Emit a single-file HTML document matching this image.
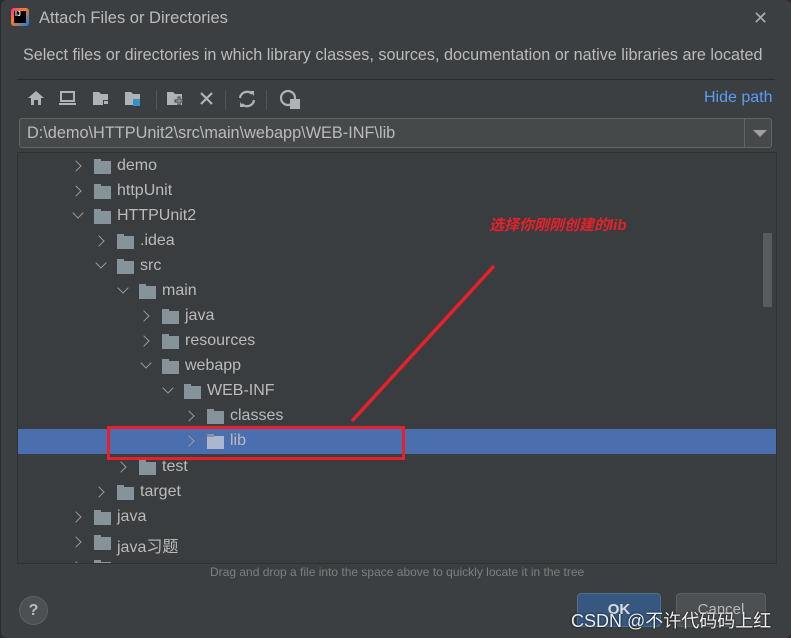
<!DOCTYPE html>
<html><head><meta charset="utf-8"><style>
*{margin:0;padding:0;box-sizing:border-box}
body{width:791px;height:638px;background:#2b2b2b;overflow:hidden;font-family:"Liberation Sans","Noto Sans CJK SC",sans-serif;position:relative}
.dlg{position:absolute;left:1px;top:0;width:790px;height:638px;background:#3c3f41;border-radius:6px}
.abs{position:absolute}
.t{color:#bbbbbb;font-size:16px;white-space:nowrap}
.row{position:absolute;left:0;height:25px;width:758px}
.row span{position:absolute;top:4px;color:#bbbbbb;font-size:16px;white-space:nowrap}
.chev{position:absolute;top:9px;width:8px;height:8px;border-right:1.6px solid #9a9a9a;border-bottom:1.6px solid #9a9a9a}
.r{transform:rotate(-45deg)}
.d{transform:rotate(45deg);top:6px}
.fold{position:absolute;top:8px;width:17px;height:13px;background:#87939a}
.fold:before{content:"";position:absolute;left:0;top:-2px;width:7px;height:3px;background:#87939a}
</style></head><body>
<div class="dlg">
<div class="abs" style="left:10px;top:8px;width:18px;height:18px;background:linear-gradient(135deg,#fc318c,#fe7a20 40%,#087cfa);border-radius:3px"><div style="position:absolute;left:3px;top:3px;width:12px;height:12px;background:#000;color:#fff;font-size:7px;font-weight:bold;line-height:8px;padding-left:1px">IJ</div></div>
<div class="abs t" style="left:38px;top:9px;font-size:16.5px">Attach Files or Directories</div>
<div class="abs" style="left:752px;top:8px;color:#aaa;font-size:18px">✕</div>
<div class="abs t" style="left:22px;top:46px;font-size:16.2px">Select files or directories in which library classes, sources, documentation or native libraries are located</div>
<div class="abs" style="left:16px;top:79px;width:758px;height:1px;background:#2b2b2b"></div>
<svg class="abs" style="left:25px;top:88px" width="280" height="22" fill="#aeb3b6">
<path d="M2 10 L10 3 L18 10 H15 V17 H12 V12 H8 V17 H5 V10Z"/>
<rect x="35" y="4" width="13" height="9" fill="none" stroke="#aeb3b6" stroke-width="2"/><rect x="33" y="15" width="17" height="2"/>
<path d="M67 4 h6 l2 2 h7 v11 h-15z"/><rect x="77" y="12" width="6" height="5" fill="#3c3f41"/><rect x="78" y="13" width="4" height="3"/>
<path d="M99 4 h6 l2 2 h7 v11 h-15z"/><rect x="107" y="11" width="7" height="7" fill="#3592c4"/>
<rect x="130" y="2" width="1" height="20" fill="#555"/>
<path d="M141 4 h6 l2 2 h7 v11 h-15z"/><path d="M152 9 h2 v3 h3 v2 h-3 v3 h-2 v-3 h-3 v-2 h3z" fill="#aeb3b6" stroke="#3c3f41"/>
<path d="M175 5 L186 16 M186 5 L175 16" stroke="#aeb3b6" stroke-width="2.2"/>
<rect x="199" y="2" width="1" height="20" fill="#555"/>
<path d="M214 10 a7 7 0 0 1 12-4 M228 12 a7 7 0 0 1-12 4" fill="none" stroke="#aeb3b6" stroke-width="2.2"/><path d="M224 3 l4 0 0 5z M218 19 l-4 0 0-5z"/>
<rect x="240" y="2" width="1" height="20" fill="#555"/>
<circle cx="262" cy="10" r="7" fill="none" stroke="#aeb3b6" stroke-width="2.2"/><rect x="264" y="11" width="10" height="10"/>
</svg>
<div class="abs" style="left:703px;top:89px;color:#589df6;font-size:16px">Hide path</div>
<div class="abs" style="left:18px;top:118px;width:753px;height:30px;background:#45494a;border:1px solid #646464;border-radius:3px"></div>
<div class="abs" style="left:743px;top:119px;width:1px;height:28px;background:#646464"></div>
<div class="abs" style="left:752px;top:130px;width:0;height:0;border-left:7px solid transparent;border-right:7px solid transparent;border-top:7px solid #a0a0a0"></div>
<div class="abs t" style="left:26px;top:124px;font-size:16.3px">D:\demo\HTTPUnit2\src\main\webapp\WEB-INF\lib</div>
<div class="abs" style="left:16px;top:152px;width:760px;height:412px;background:#3a3d3f;border:1px solid #2f3133;overflow:hidden">
<div class="abs" style="left:745px;top:80px;width:9px;height:74px;background:#585b5d"></div>
<div class="row" style="top:0"><i class="chev r" style="left:54px"></i><i class="fold" style="left:76px"></i><span style="left:99px">demo</span></div>
<div class="row" style="top:25px"><i class="chev r" style="left:54px"></i><i class="fold" style="left:76px"></i><span style="left:99px">httpUnit</span></div>
<div class="row" style="top:50px"><i class="chev d" style="left:56px"></i><i class="fold" style="left:76px"></i><span style="left:99px">HTTPUnit2</span></div>
<div class="row" style="top:75px"><i class="chev r" style="left:77px"></i><i class="fold" style="left:99px"></i><span style="left:122px">.idea</span></div>
<div class="row" style="top:100px"><i class="chev d" style="left:79px"></i><i class="fold" style="left:99px"></i><span style="left:122px">src</span></div>
<div class="row" style="top:125px"><i class="chev d" style="left:101px"></i><i class="fold" style="left:121px"></i><span style="left:144px">main</span></div>
<div class="row" style="top:150px"><i class="chev r" style="left:122px"></i><i class="fold" style="left:144px"></i><span style="left:167px">java</span></div>
<div class="row" style="top:175px"><i class="chev r" style="left:122px"></i><i class="fold" style="left:144px"></i><span style="left:167px">resources</span></div>
<div class="row" style="top:200px"><i class="chev d" style="left:124px"></i><i class="fold" style="left:144px"></i><span style="left:167px">webapp</span></div>
<div class="row" style="top:225px"><i class="chev d" style="left:146px"></i><i class="fold" style="left:166px"></i><span style="left:189px">WEB-INF</span></div>
<div class="row" style="top:250px"><i class="chev r" style="left:167px"></i><i class="fold" style="left:189px"></i><span style="left:212px">classes</span></div>
<div class="row" style="top:276px;background:#4b6eaf"><i class="chev r" style="left:167px;top:8px"></i><i class="fold" style="left:189px;background:#a9b8cf;top:7px"></i><span style="left:212px;top:3px">lib</span></div>
<div class="row" style="top:301px"><i class="chev r" style="left:99px"></i><i class="fold" style="left:121px"></i><span style="left:144px">test</span></div>
<div class="row" style="top:326px"><i class="chev r" style="left:77px"></i><i class="fold" style="left:99px"></i><span style="left:122px">target</span></div>
<div class="row" style="top:351px"><i class="chev r" style="left:54px"></i><i class="fold" style="left:76px"></i><span style="left:99px">java</span></div>
<div class="row" style="top:376px"><i class="chev r" style="left:54px"></i><i class="fold" style="left:76px"></i><span style="left:99px">java习题</span></div>
<div class="row" style="top:401px"><i class="chev r" style="left:54px"></i><i class="fold" style="left:76px"></i><span style="left:99px">java算法</span></div>
</div>
<div class="abs" style="left:106px;top:426px;width:298px;height:34px;border:3px solid #e8202a"></div>
<svg class="abs" style="left:0;top:0" width="791" height="638"><line x1="493" y1="266" x2="351" y2="421" stroke="#e8202a" stroke-width="3.5"/></svg>
<div class="abs" style="left:488px;top:214px;color:#e8202a;font-size:15px;font-style:italic;font-weight:bold">选择你刚刚创建的lib</div>
<div class="abs" style="left:209px;top:565px;color:#7d7f80;font-size:12px">Drag and drop a file into the space above to quickly locate it in the tree</div>
<div class="abs" style="left:18px;top:596px;width:29px;height:29px;border-radius:50%;background:#4c5052;border:1px solid #5e6060;color:#bbb;text-align:center;font-size:16px;line-height:27px;font-weight:bold">?</div>
<div class="abs" style="left:576px;top:593px;width:84px;height:34px;background:#365880;border:1px solid #4c708c;border-radius:4px;color:#ddd;text-align:center;font-size:15px;font-weight:bold;line-height:32px">OK</div>
<div class="abs" style="left:675px;top:593px;width:90px;height:34px;background:#4c5052;border:1px solid #5e6060;border-radius:4px;color:#bbb;text-align:center;font-size:15px;line-height:32px">Cancel</div>
<div class="abs" style="left:570px;top:607px;color:#eee;font-size:18px;text-shadow:0 0 2px #000">CSDN @不许代码码上红</div>
</div>
</body></html>
